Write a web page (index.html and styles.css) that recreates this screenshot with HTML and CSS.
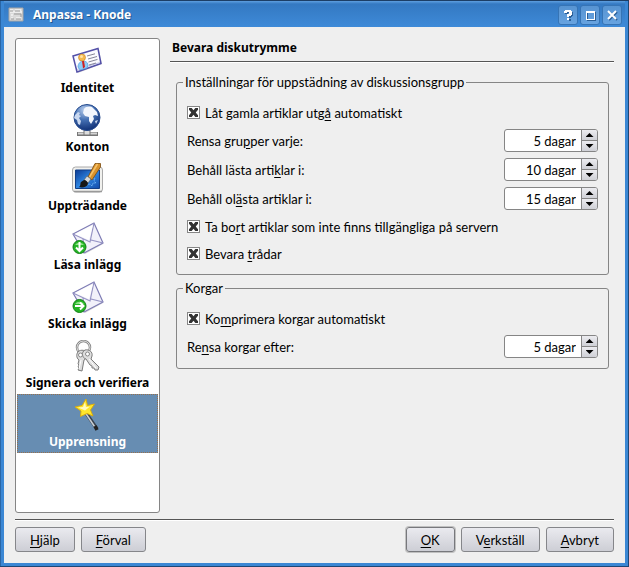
FILE: index.html
```html
<!DOCTYPE html>
<html lang="sv">
<head>
<meta charset="utf-8">
<title>Anpassa - Knode</title>
<link rel="stylesheet" href="styles.css">
</head>
<body>
<div class="window">
  <header class="titlebar">
    <svg class="app-icon" viewBox="0 0 16 16" aria-hidden="true">
      <path d="M1 1h14v13H1z" fill="#d9d9d9" stroke="#a5a5a5"/>
      <path d="M2 3h3M7 3h6M2 5h12M8 11h5M3 8h2M3 11h2" stroke="#fff"/>
      <path d="M2 4h3M7 4h5M6 7h7v3M3 12h3M8 12h5" fill="none" stroke="#999"/>
    </svg>
    <h1 class="caption">Anpassa - Knode</h1>
    <button class="wm" aria-label="Hjälp om fönstret"><svg viewBox="0 0 18 18"><path class="shade" d="M6 7V6h1V5h4v1h1v2h-1v1h-1v2M10 12v2" transform="translate(1 1)"/><path d="M6 7V6h1V5h4v1h1v2h-1v1H9v2M9 12v2"/></svg></button>
    <button class="wm" aria-label="Maximera"><svg viewBox="0 0 18 18"><path class="shade thin" d="M6 6h8v8H6z"/><path class="thin" d="M5 5h8v8H5zM5 6h8"/></svg></button>
    <button class="wm" aria-label="Stäng"><svg viewBox="0 0 18 18"><path class="shade" d="m6 6 8 8M14 6l-8 8"/><path d="m5 5 8 8M13 5l-8 8"/></svg></button>
  </header>

  <div class="client">
    <div class="body">
      <nav class="pages">
        <a class="page" href="#identitet">
          <svg viewBox="0 0 32 32" aria-hidden="true">
            <path d="M2 12 27 5l3 14-24 9z" fill="#777" opacity=".25"/>
            <path d="M1 11 26 3.500l3 15L5 27z" fill="#fbfbff" stroke="#5350a8" stroke-width="1.500"/>
            <path d="M5 24.500 28 17.500" stroke="#b9bbe6"/>
            <path d="m15 11 8-2.200M16 14l9-2.500M16.500 17l9-2.600M17 20l7-2" stroke="#858598"/>
            <path d="M6 22c0-4 3-6 5-6s5 1 5 4l-1 3-7 2z" fill="#8fcbf5" stroke="#4c9fe0" stroke-width=".7"/>
            <path d="m10 16 2 0 1 6-2 1.500z" fill="#cf2020"/>
            <circle cx="10" cy="12.500" r="3.500" fill="#f4b84e" stroke="#c58423" stroke-width=".6"/>
            <circle cx="9.500" cy="11.500" r="1.500" fill="#ffe3a4"/>
          </svg>
          <span>Identitet</span>
        </a>
        <a class="page" href="#konton">
          <svg viewBox="0 0 32 32" aria-hidden="true">
            <defs><radialGradient id="globe" cx=".4" cy=".2" r=".85"><stop offset="0" stop-color="#b7cdec"/><stop offset=".45" stop-color="#4672b5"/><stop offset="1" stop-color="#0b2a70"/></radialGradient></defs>
            <path d="M5 30h21" stroke="#777" stroke-width="4"/>
            <path d="M6 29.500h19" stroke="#d5d5d5" stroke-width="2"/>
            <path d="M12 26h6v5h-6z" fill="#ddd" stroke="#777"/>
            <circle cx="15" cy="13.500" r="13" fill="url(#globe)" stroke="#254a8d"/>
            <path d="M12 5c2-3 7-3 9-1l4 4 1 4-3-1-2 1 1 3-3 5-2-3v-4l-4-1-2-3z" fill="#f2f6fd"/>
            <path d="m3 11 3-3 2 1-1 2 2 1-2 2 2 3-1 4-2-1-1-4-3-2z" fill="#c9d8f0"/>
            <path d="m23 17 3-1-2 4z" fill="#c9d8f0"/>
          </svg>
          <span>Konton</span>
        </a>
        <a class="page" href="#upptradande">
          <svg viewBox="0 0 32 32" aria-hidden="true">
            <defs><linearGradient id="screen" x2="1" y2="1"><stop offset="0" stop-color="#0c3a93"/><stop offset=".5" stop-color="#2e86e2"/><stop offset="1" stop-color="#124aa8"/></linearGradient></defs>
            <rect x=".5" y="4" width="30" height="25" rx="3" fill="#f1f1ee" stroke="#aaa"/>
            <path d="M2 28.500h28" stroke="#999" stroke-width="1.500"/>
            <path d="M3.500 7h24v18.500h-24z" fill="url(#screen)" stroke="#123f87"/>
            <path d="m19 14 1 2 3-1-1 3 2 2-3 0-1 3-2-2-3 1 1-3" fill="none" stroke="#83c5ff" stroke-dasharray="1 1"/>
            <path d="M23 .500h5.500V4L20 17l-4-3z" fill="#d8922c" stroke="#7b4a0d" stroke-width=".8"/>
            <path d="m25.500 1-8 13" stroke="#f6c269" stroke-width="1.500"/>
            <path d="m15 13 4 3-3 4-4-3z" fill="#d5d9dc" stroke="#555" stroke-width=".6"/>
            <path d="M12 17c2 0 4 2 4 4-1 3-5 4-9 3 2-1 1-4 2-5z" fill="#171717"/>
          </svg>
          <span>Uppträdande</span>
        </a>
        <a class="page" href="#lasa">
          <svg viewBox="0 0 32 32" aria-hidden="true">
            <path d="m2 14 19-12 10 20-18 10z" fill="#777" opacity=".3"/>
            <path d="m1 12 21-11 9 20-19 10z" fill="#f2f1fa" stroke="#7e7cb4" stroke-width="1.200"/>
            <path d="m1 12 17 8L22 1M11 17l1 13M19 18l12 3" fill="none" stroke="#9694c4" stroke-width="1.200"/>
            <path d="m3 12 14 6 4-15z" fill="#fff"/>
            <circle cx="7.500" cy="25" r="6.500" fill="#25b425" stroke="#138016"/>
            <path d="M3 23a5.500 5 0 0 1 9 0z" fill="#8ee486"/>
            <path d="M7.500 20v9M4 25.500 7.500 29l3.500-3.500" fill="none" stroke="#fff" stroke-width="2"/>
          </svg>
          <span>Läsa inlägg</span>
        </a>
        <a class="page" href="#skicka">
          <svg viewBox="0 0 32 32" aria-hidden="true">
            <path d="m2 14 19-12 10 20-18 10z" fill="#777" opacity=".3"/>
            <path d="m1 12 21-11 9 20-19 10z" fill="#f2f1fa" stroke="#7e7cb4" stroke-width="1.200"/>
            <path d="m1 12 17 8L22 1M11 17l1 13M19 18l12 3" fill="none" stroke="#9694c4" stroke-width="1.200"/>
            <path d="m3 12 14 6 4-15z" fill="#fff"/>
            <circle cx="7.500" cy="25" r="6.500" fill="#25b425" stroke="#138016"/>
            <path d="M3 23a5.500 5 0 0 1 9 0z" fill="#8ee486"/>
            <path d="M3 25h8.500M8 21.500l3.500 3.500L8 28.500" fill="none" stroke="#fff" stroke-width="2"/>
          </svg>
          <span>Skicka inlägg</span>
        </a>
        <a class="page" href="#signera">
          <svg viewBox="0 0 32 32" aria-hidden="true">
            <circle cx="11.500" cy="7.500" r="6.500" fill="none" stroke="#858585" stroke-width="2.500"/>
            <circle cx="11.500" cy="7.500" r="6.500" fill="none" stroke="#ddd"/>
            <g fill="#dedede" stroke="#7c7c7c">
              <path d="M7 11c4-2 8 0 8 4 0 2-1 4-3 5l-2 11-4-1 1-2-1-1 1-2-1-1 1-4c-3-2-3-7 0-9z"/>
              <path d="M13 10c4-1 8 2 7 6l-1 3 8 8-1 3-3 0-1-2-2 0 0-2-2-1-4-6c-4-1-5-7-1-9z"/>
            </g>
            <circle cx="8.500" cy="15" r="2" fill="#fff" stroke="#888"/>
            <circle cx="15.500" cy="14" r="2" fill="#fff" stroke="#888"/>
            <path d="m9 20-2 9M17 19l7 9" stroke="#fff"/>
          </svg>
          <span>Signera och verifiera</span>
        </a>
        <a class="page selected" href="#upprensning" aria-current="page">
          <svg viewBox="0 0 32 32" aria-hidden="true">
            <path d="m14 14 11 16" stroke="#39424d" stroke-width="3.500"/>
            <path d="m13.500 14 10 15" stroke="#c9cfd4" stroke-width="1.500"/>
            <path d="m23 27 2 4" stroke="#222" stroke-width="3.500"/>
            <path d="m14 0 1.500 6.500 7-1.500-4 6 2.500 6-6-2.500-6.500 3L9 12 3 8l7-1.500z" fill="#ffe62c" stroke="#d9a90a" stroke-width=".9"/>
            <path d="m13 3 1 5 4-.5-5 4-7-3 5-.500z" fill="#fffac0"/>
          </svg>
          <span>Upprensning</span>
        </a>
      </nav>

      <main class="content">
        <h2 class="heading">Bevara diskutrymme</h2>
        <form class="groups">
          <fieldset>
            <legend>Inställningar för uppstädning av diskussionsgrupp</legend>
            <label class="check"><input type="checkbox" checked><span>Låt gamla artiklar utg<u>å</u> automatiskt</span></label>
            <div class="field">
              <label for="groups">Rensa gru<u>p</u>per varje:</label>
              <div class="spin"><input id="groups" type="text" value="5 dagar"><div class="steps"><button type="button" class="up" aria-label="Öka"></button><button type="button" class="down" aria-label="Minska"></button></div></div>
            </div>
            <div class="field">
              <label for="read">Behåll lästa arti<u>k</u>lar i:</label>
              <div class="spin"><input id="read" type="text" value="10 dagar"><div class="steps"><button type="button" class="up" aria-label="Öka"></button><button type="button" class="down" aria-label="Minska"></button></div></div>
            </div>
            <div class="field">
              <label for="unread">Behåll ol<u>ä</u>sta artiklar i:</label>
              <div class="spin"><input id="unread" type="text" value="15 dagar"><div class="steps"><button type="button" class="up" aria-label="Öka"></button><button type="button" class="down" aria-label="Minska"></button></div></div>
            </div>
            <label class="check"><input type="checkbox" checked><span>Ta bo<u>r</u>t artiklar som inte finns tillgängliga på servern</span></label>
            <label class="check"><input type="checkbox" checked><span>Bevara <u>t</u>rådar</span></label>
          </fieldset>
          <fieldset>
            <legend>Korgar</legend>
            <label class="check"><input type="checkbox" checked><span>Ko<u>m</u>primera korgar automatiskt</span></label>
            <div class="field">
              <label for="folders">Re<u>n</u>sa korgar efter:</label>
              <div class="spin"><input id="folders" type="text" value="5 dagar"><div class="steps"><button type="button" class="up" aria-label="Öka"></button><button type="button" class="down" aria-label="Minska"></button></div></div>
            </div>
          </fieldset>
        </form>
      </main>
    </div>

    <footer class="actions">
      <button class="btn"><u>H</u>jälp</button>
      <button class="btn"><u>F</u>örval</button>
      <span class="spacer"></span>
      <button class="btn default"><u>O</u>K</button>
      <button class="btn">V<u>e</u>rkställ</button>
      <button class="btn"><u>A</u>vbryt</button>
    </footer>
  </div>
</div>
</body>
</html>
```
FILE: styles.css
```css
* { box-sizing: border-box; }

body {
  margin: 0;
  font: 13px/18px Lato, "Noto Sans", sans-serif;
  color: #000;
}

button, input { font: inherit; color: inherit; }
u { text-underline-offset: 2px; }

.window {
  display: flex;
  flex-direction: column;
  min-height: 100vh;
  padding: 0 4px 4px;
  background: #3b87d4;
  border-top: 1px solid #1c3e66;
  box-shadow: inset -1px -1px #1d4775, inset 1px 0 #2a66a6;
}

.titlebar {
  display: flex;
  align-items: center;
  gap: 4px;
  height: 26px;
  padding: 2px 3px 0 4px;
  background: linear-gradient(#5e9fe0, #3479c2 3px, #3e8ad8);
}

.app-icon { width: 16px; height: 16px; }

.caption {
  flex: 1;
  margin: 0 0 0 5px;
  font-family: "Noto Sans", sans-serif;
  font-size: 12px;
  line-height: 18px;
  color: #fff;
  text-shadow: 1px 1px #23568d;
}

.wm {
  width: 20px;
  height: 20px;
  margin-left: -2px;
  padding: 0;
  border: 1px solid #3674b5;
  border-radius: 3px;
  background: linear-gradient(#5794d2, #67a3e0);
}

.wm svg { display: block; width: 18px; height: 18px; }
.wm path { fill: none; stroke: #fff; stroke-width: 2; }
.wm .shade { stroke: #2b5f97; }
.wm .thin { stroke-width: 1; shape-rendering: crispEdges; }

.client {
  display: flex;
  flex: 1;
  flex-direction: column;
  padding: 11px;
  background: #efefef;
}

.body {
  display: flex;
  flex: 1;
  gap: 10px;
}

.pages {
  flex: 0 0 145px;
  padding: 1px;
  background: #fff;
  border: 1px solid #858585;
  border-radius: 3px;
}

.page {
  display: flex;
  flex-direction: column;
  align-items: center;
  height: 59px;
  padding-top: 4px;
  border: 1px solid transparent;
  color: #000;
  font: bold 12px/22px "Noto Sans", sans-serif;
  text-decoration: none;
  white-space: nowrap;
}

.page svg {
  flex: none;
  width: 32px;
  height: 32px;
}

.page.selected {
  border: 1px dotted #97704c;
  background: #678db2;
  color: #fff;
}

.content { flex: 1; }

.heading {
  margin: 0;
  padding: 1px 2px 4px;
  border-bottom: 1px solid #555;
  box-shadow: 0 1px #fff;
  font: bold 12px/18px "Noto Sans", sans-serif;
}

.groups { padding: 11px 5px 0 6px; }

fieldset {
  min-width: 0;
  margin: 0 0 4px;
  padding: 11px 10px 10px;
  border: 1px solid #858585;
  border-radius: 3px;
}

legend {
  margin-left: -4px;
  padding: 0 2px;
}

.check {
  display: flex;
  align-items: center;
  gap: 5px;
  height: 21px;
  margin-bottom: 6px;
}

.check input {
  position: relative;
  width: 13px;
  height: 13px;
  margin: 0;
  appearance: none;
  border: 1px solid #858585;
  background: #fff;
}

.check input:checked::before {
  content: "";
  position: absolute;
  inset: 1px;
  background: #333;
  clip-path: polygon(0 0, 30% 0, 50% 25%, 70% 0, 100% 0, 100% 20%, 75% 50%, 100% 80%, 100% 100%, 70% 100%, 50% 75%, 30% 100%, 0 100%, 0 80%, 25% 50%, 0 20%);
}

.field {
  display: flex;
  align-items: center;
  justify-content: space-between;
  height: 23px;
  margin-bottom: 6px;
}

.check:last-child,
.field:last-child { margin-bottom: 0; }

.spin {
  display: flex;
  width: 94px;
  height: 23px;
  overflow: hidden;
  border: 1px solid #858585;
  border-radius: 3px;
  background: #fff;
}

.spin input {
  flex: 1;
  min-width: 0;
  padding: 0 5px;
  border: 0;
  background: none;
  text-align: right;
}

.steps {
  display: flex;
  flex-direction: column;
  width: 16px;
  border-left: 1px solid #858585;
}

.steps button {
  display: flex;
  flex: 1;
  align-items: center;
  justify-content: center;
  padding: 0;
  border: 0;
  background: linear-gradient(#ececf0, #cfd0d6);
}

.steps .down { border-top: 1px solid #858585; }

.steps button::before {
  content: "";
  width: 8px;
  height: 4px;
  background: #000;
  clip-path: polygon(50% 0, 100% 100%, 0 100%);
}

.steps .down::before { clip-path: polygon(0 0, 100% 0, 50% 100%); }

.actions {
  display: flex;
  gap: 6px;
  margin-top: 6px;
  padding-top: 7px;
  border-top: 1px solid #555;
  box-shadow: inset 0 1px #fff;
}

.spacer { flex: 1; }

.btn {
  height: 25px;
  padding: 0 14px;
  border: 1px solid #85868a;
  border-radius: 3px;
  background: linear-gradient(#eaeaef, #cdced5);
}

.btn.default {
  border-color: #77787c;
  box-shadow: 0 0 0 1px #c0c0c0;
}
```
